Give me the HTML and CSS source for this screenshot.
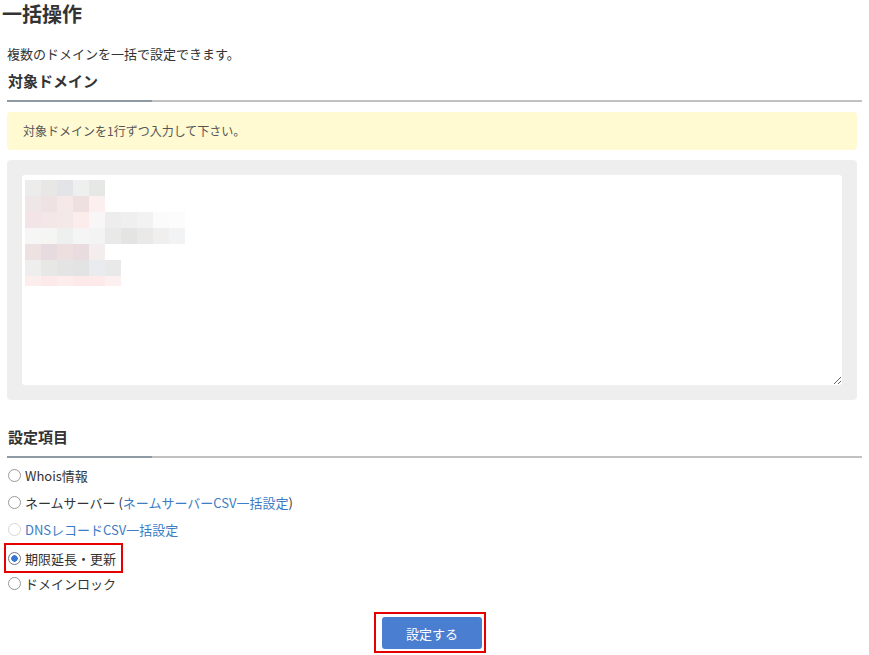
FILE: index.html
```html
<!DOCTYPE html>
<html lang="ja">
<head>
    <meta charset="UTF-8">
    <title>一括操作</title>
    <link rel="stylesheet" href="styles.css">
</head>
<body>
    <div class="page">
        <h1>一括操作</h1>
        <p class="lead">複数のドメインを一括で設定できます。</p>

        <h2 class="section-title">対象ドメイン</h2>
        <div class="notice">対象ドメインを1行ずつ入力して下さい。</div>
        <div class="input-panel">
            <div class="textarea-wrap">
                <textarea class="domains"></textarea>
                <svg class="mosaic" width="160" height="106" viewBox="0 0 160 106">
                    <g>
                        <rect x="0" y="0" width="16" height="16" fill="#ececec"/>
                        <rect x="16" y="0" width="16" height="16" fill="#e8e7e5"/>
                        <rect x="32" y="0" width="16" height="16" fill="#e3e4e8"/>
                        <rect x="48" y="0" width="16" height="16" fill="#efefef"/>
                        <rect x="64" y="0" width="16" height="16" fill="#e6e8e6"/>
                    </g>
                    <g>
                        <rect x="0" y="16" width="16" height="16" fill="#efe6e7"/>
                        <rect x="16" y="16" width="16" height="16" fill="#efe2e2"/>
                        <rect x="32" y="16" width="16" height="16" fill="#f4e8e8"/>
                        <rect x="48" y="16" width="16" height="16" fill="#eee0e0"/>
                        <rect x="64" y="16" width="16" height="16" fill="#fbeff0"/>
                    </g>
                    <g>
                        <rect x="0" y="32" width="16" height="16" fill="#f3e5e7"/>
                        <rect x="16" y="32" width="16" height="16" fill="#f4e7e7"/>
                        <rect x="32" y="32" width="16" height="16" fill="#f4e9e9"/>
                        <rect x="48" y="32" width="16" height="16" fill="#fcecec"/>
                        <rect x="64" y="32" width="16" height="16" fill="#f8f6f7"/>
                        <rect x="80" y="32" width="16" height="16" fill="#ededed"/>
                        <rect x="96" y="32" width="16" height="16" fill="#efefef"/>
                        <rect x="112" y="32" width="16" height="16" fill="#f2f2f2"/>
                        <rect x="128" y="32" width="16" height="16" fill="#fbfbfb"/>
                        <rect x="144" y="32" width="16" height="16" fill="#fcfcfc"/>
                    </g>
                    <g>
                        <rect x="0" y="48" width="16" height="16" fill="#f6f6f6"/>
                        <rect x="16" y="48" width="16" height="16" fill="#f5f5f4"/>
                        <rect x="32" y="48" width="16" height="16" fill="#eef0ef"/>
                        <rect x="48" y="48" width="16" height="16" fill="#f5f5f5"/>
                        <rect x="64" y="48" width="16" height="16" fill="#f3f3f3"/>
                        <rect x="80" y="48" width="16" height="16" fill="#e9e9e9"/>
                        <rect x="96" y="48" width="16" height="16" fill="#e4e4e3"/>
                        <rect x="112" y="48" width="16" height="16" fill="#e9e9e9"/>
                        <rect x="128" y="48" width="16" height="16" fill="#f0efee"/>
                        <rect x="144" y="48" width="16" height="16" fill="#f2f3f5"/>
                    </g>
                    <g>
                        <rect x="0" y="64" width="16" height="16" fill="#ede1e2"/>
                        <rect x="16" y="64" width="16" height="16" fill="#e6dcdf"/>
                        <rect x="32" y="64" width="16" height="16" fill="#eddfdf"/>
                        <rect x="48" y="64" width="16" height="16" fill="#e8dce0"/>
                        <rect x="64" y="64" width="16" height="16" fill="#f3eded"/>
                    </g>
                    <g>
                        <rect x="0" y="80" width="16" height="16" fill="#eeeeee"/>
                        <rect x="16" y="80" width="16" height="16" fill="#e7e7e6"/>
                        <rect x="32" y="80" width="16" height="16" fill="#e4e4e4"/>
                        <rect x="48" y="80" width="16" height="16" fill="#e3e3e3"/>
                        <rect x="64" y="80" width="16" height="16" fill="#eaebee"/>
                        <rect x="80" y="80" width="16" height="16" fill="#e9e9e9"/>
                    </g>
                    <g>
                        <rect x="0" y="96" width="16" height="10" fill="#fdeeee"/>
                        <rect x="16" y="96" width="16" height="10" fill="#fee9ea"/>
                        <rect x="32" y="96" width="16" height="10" fill="#fdeded"/>
                        <rect x="48" y="96" width="16" height="10" fill="#fee9ea"/>
                        <rect x="64" y="96" width="16" height="10" fill="#feeaea"/>
                        <rect x="80" y="96" width="16" height="10" fill="#fdf0f0"/>
                    </g>
                </svg>
            </div>
        </div>

        <h2 class="section-title second">設定項目</h2>
        <ul class="options">
            <li><label><span class="radio"></span>Whois情報</label></li>
            <li><label><span class="radio"></span>ネームサーバー (<a href="#">ネームサーバーCSV一括設定</a>)</label></li>
            <li><label class="disabled"><span class="radio"></span><a href="#">DNSレコードCSV一括設定</a></label></li>
            <li><label class="marked"><span class="radio checked"></span>期限延長・更新</label></li>
            <li><label><span class="radio"></span>ドメインロック</label></li>
        </ul>

        <div class="actions">
            <span class="marked-button"><button type="button">設定する</button></span>
        </div>
    </div>
</body>
</html>
```

FILE: styles.css
```css
body {
    margin: 0;
    padding: 0;
    background: #fff;
    color: #333;
    font-family: "Noto Sans CJK JP", "Noto Sans", sans-serif;
    font-size: 12px;
}
.page {
    width: 850px;
    padding: 0 0 0 7px;
}
h1 {
    margin: 0 0 0 -5px;
    padding-top: 2px;
    font-size: 20px;
    line-height: 24px;
    font-weight: bold;
    color: #333;
}
.lead {
    margin: 19px 0 0 0;
    font-size: 13px;
    line-height: 18px;
}
.section-title {
    position: relative;
    margin: 8px -5px 0 0;
    padding: 0 0 0 1px;
    font-size: 15px;
    line-height: 20px;
    height: 29px;
    border-bottom: 2px solid #c1c1c1;
}
.section-title::after {
    content: "";
    position: absolute;
    left: 0;
    bottom: -2px;
    width: 145px;
    height: 2px;
    background: #8d99a3;
}
.section-title.second {
    margin-top: 27px;
}
.notice {
    margin-top: 10px;
    height: 38px;
    padding: 0 16px;
    background: #fffad2;
    border-radius: 4px;
    color: #555;
    line-height: 38px;
}
.input-panel {
    margin-top: 10px;
    padding: 15px;
    background: #eeeeee;
    border-radius: 4px;
}
.textarea-wrap {
    position: relative;
    height: 210px;
}
.domains {
    display: block;
    box-sizing: border-box;
    width: 100%;
    height: 210px;
    border: none;
    border-radius: 3px;
    background: #fff;
    resize: vertical;
}
.mosaic {
    position: absolute;
    left: 3px;
    top: 5px;
}
.options {
    list-style: none;
    margin: 4px 0 0;
    padding: 0;
}
.options li {
    height: 27px;
    line-height: 27px;
    font-size: 13px;
}
.options label {
    display: inline-flex;
    align-items: center;
    height: 27px;
    padding: 0 1px;
}
.options a {
    color: #3b7cc4;
    text-decoration: none;
}
.radio {
    box-sizing: border-box;
    width: 13px;
    height: 13px;
    margin-right: 4px;
    border: 1px solid #999;
    border-radius: 50%;
    background: #fff;
}
.disabled .radio {
    border-color: #d6d6d6;
}
.radio.checked {
    border-color: #707a86;
    background: radial-gradient(circle, #3a78d0 0, #3a78d0 3px, #fff 3.5px);
}
.options .marked {
    margin-left: -3px;
    padding: 0 5px 0 2px;
    border: 2px solid #e60000;
    box-sizing: border-box;
    height: 30px;
}
.actions {
    margin-top: 15px;
    text-align: center;
}
.marked-button {
    display: inline-block;
    margin-left: -4px;
    padding: 3px 2px 2px 6px;
    border: 2px solid #e60000;
}
button {
    width: 100px;
    height: 32px;
    border: none;
    border-radius: 3px;
    background: #4a7ed1;
    color: #fff;
    font-family: "Noto Sans CJK JP", sans-serif;
    font-size: 13px;
    cursor: pointer;
}
```
